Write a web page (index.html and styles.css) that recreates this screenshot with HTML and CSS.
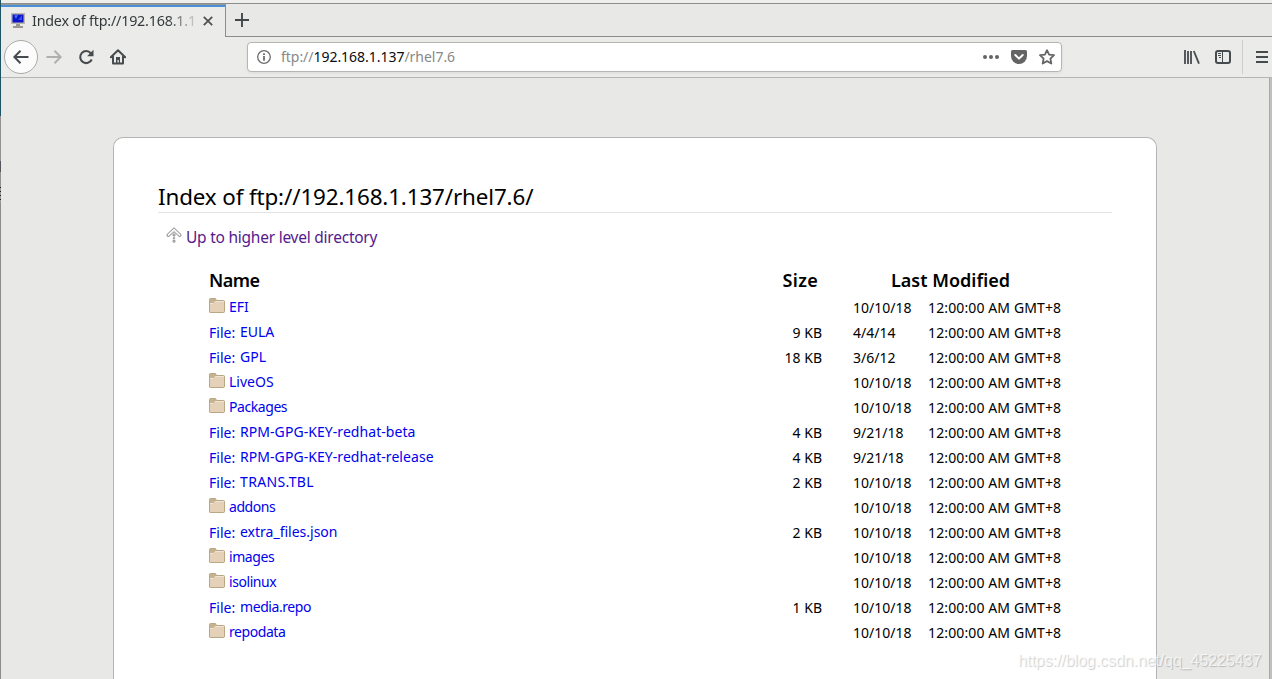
FILE: index.html
```html
<!DOCTYPE html>
<html lang="en">
<head>
<meta charset="utf-8">
<title>Index of ftp://192.168.1.137/rhel7.6/</title>
<link rel="stylesheet" href="styles.css">
</head>
<body>
<svg class="defs" width="0" height="0">
  <symbol id="folder" viewBox="0 0 16 16">
    <path d="M.5 14V1.5Q.5.5 1.5.5H6.5L7.5 2.5H14.5Q15.5 2.5 15.5 3.5V13.500Q15.500 14.500 14.500 14.500H1.500Q.5 14.500.5 14Z" fill="#c6b28e" stroke="#b9a684"/>
    <path d="M1 6H4.500L6.500 3.500H15V14H1Z" fill="#e4d1b8"/>
    <path d="M1 5.500H4.300L6.300 3.500H15" fill="none" stroke="#f0e4d4"/>
  </symbol>
</svg>
<div class="window">
  <div class="edge"><i class="edge-teal"></i><i class="edge-gray"></i><i class="edge-dark"></i><i class="edge-gray short"></i><i class="edge-marks"></i></div>
  <div class="browser">
    <div class="titlebar"></div>
    <div class="tabs">
      <div class="tab">
        <svg class="favicon" width="14" height="16" viewBox="0 0 14 16"><path d="M0 0H14V11H0Z" fill="#b9b7ae"/><path d="M1.500 1.500H12.500V9.500H1.500Z" fill="#0b12c8"/><path d="M3 2.500L7 2 5 6Z" fill="#3f75f5"/><path d="M7 7L11 2V7Z" fill="#2b55eb"/><path d="M5 11H9V13H12V15H2V13H5Z" fill="#99978f"/></svg>
        <span class="tab-title">Index of ftp://192.168.1.1</span>
        <svg class="close" width="10" height="10" viewBox="0 0 10 10"><path d="M.8.8L9.200 9.200M9.200.8L.8 9.200" stroke="#4b4f50" stroke-width="1.700" fill="none"/></svg>
      </div>
      <div class="tab-rest"><svg width="14" height="14" viewBox="0 0 14 14"><path d="M7 0V14M0 7H14" stroke="#43484a" stroke-width="1.900"/></svg></div>
    </div>
    <div class="toolbar">
      <div class="back"><svg width="16" height="16" viewBox="0 0 16 16"><path d="M15.500 8H1.500M7.500 1.800L1.300 8l6.200 6.200" fill="none" stroke="#464b4d" stroke-width="2"/></svg></div>
      <svg class="forward" width="16" height="16" viewBox="0 0 16 16"><path d="M.5 8H14.500M8.500 1.800L14.700 8l-6.200 6.200" fill="none" stroke="#aeb0ae" stroke-width="2"/></svg>
      <svg class="reload" width="16" height="16" viewBox="0 0 16 16"><path d="M12.800 4.200A6 6 0 1 0 13.700 10.500" fill="none" stroke="#464b4d" stroke-width="2.100"/><path d="M15.500.8V7.200H9.100Z" fill="#464b4d"/></svg>
      <svg class="home" width="16" height="16" viewBox="0 0 16 16"><path d="M.8 8.300L8 1.300l7.200 7M3 7.500V14.500H13V7.500" fill="none" stroke="#464b4d" stroke-width="2" stroke-linejoin="round" stroke-linecap="round"/><path d="M6 8H10V14H8.800V11H7.500V14H6Z" fill="#464b4d"/></svg>
      <div class="urlbar">
        <svg width="14" height="14" viewBox="0 0 14 14"><circle cx="7" cy="7" r="6.300" fill="none" stroke="#6d6d6d" stroke-width="1.300"/><path d="M6.100 6H7.900V10.800H6.100ZM6.100 3.200H7.900V4.900H6.100Z" fill="#6d6d6d"/></svg>
        <span class="url">ftp://<b>192.168.1.137</b>/rhel7.6</span>
        <svg class="dots" width="16" height="4" viewBox="0 0 16 4"><g fill="#646464"><circle cx="2" cy="2" r="2"/><circle cx="8" cy="2" r="2"/><circle cx="14" cy="2" r="2"/></g></svg>
        <svg class="pocket" width="16" height="14" viewBox="0 0 16 14"><path d="M1.500 0H14.500Q16 0 16 1.500V6A8 8 0 0 1 0 6V1.500Q0 0 1.500 0Z" fill="#646464"/><path d="M4.300 5L8 8.600 11.700 5" fill="none" stroke="#fff" stroke-width="2" stroke-linecap="round" stroke-linejoin="round"/></svg>
        <svg class="star" width="16" height="16" viewBox="0 0 16 16"><path d="M8 1.200L10.100 5.600 15 6.200 11.400 9.600 12.300 14.500 8 12.100 3.700 14.500 4.600 9.600 1 6.200 5.900 5.600Z" fill="none" stroke="#646464" stroke-width="1.800" stroke-linejoin="round"/></svg>
      </div>
      <svg class="library" width="16" height="14" viewBox="0 0 16 14"><path d="M1 0V14M4 1V14M7 1V14M9.800 1L15 13.700" stroke="#464b4d" stroke-width="1.800"/></svg>
      <svg class="sidebar" width="16" height="14" viewBox="0 0 16 14"><rect x="1" y="1" width="14" height="12" rx="2" fill="none" stroke="#464b4d" stroke-width="2"/><path d="M7.500 1V13M3 3.500H6M3 5.500H6M4 7.500H6" stroke="#464b4d"/></svg>
      <i class="separator"></i>
      <svg class="menu" width="12" height="12" viewBox="0 0 12 12"><path d="M0 1H12M0 6H12M0 11H12" stroke="#464b4d" stroke-width="2"/></svg>
    </div>
    <main class="viewport">
      <section class="card">
        <h1><span>Index of ftp://192.168.1.137/rhel7.6/</span></h1>
        <a class="up"><svg width="16" height="16" viewBox="0 0 16 16"><path d="M8 .8L15 7.500Q15.500 9.800 13.200 9.500L8 4.700 2.800 9.500Q.5 9.800 1 7.500Z" fill="#f6f6f6" stroke="#858585"/><g fill="#eee" stroke="#858585"><circle cx="8" cy="8" r="1.100"/><circle cx="8" cy="11.200" r=".7"/><circle cx="8" cy="14.200" r="1.100"/></g></svg><span>Up to higher level directory</span></a>
        <div class="listing">
          <div class="row head"><span class="name">Name</span><span class="size">Size</span><span class="modified">Last Modified</span></div>
          <div class="row"><a class="dir"><svg><use href="#folder"/></svg>EFI</a><span class="size"></span><span class="date">10/10/18</span><span class="time">12:00:00 AM GMT+8</span></div>
          <div class="row"><a class="file"><i>File:</i>EULA</a><span class="size">9 KB</span><span class="date">4/4/14</span><span class="time">12:00:00 AM GMT+8</span></div>
          <div class="row"><a class="file"><i>File:</i>GPL</a><span class="size">18 KB</span><span class="date">3/6/12</span><span class="time">12:00:00 AM GMT+8</span></div>
          <div class="row"><a class="dir"><svg><use href="#folder"/></svg>LiveOS</a><span class="size"></span><span class="date">10/10/18</span><span class="time">12:00:00 AM GMT+8</span></div>
          <div class="row"><a class="dir tight"><svg><use href="#folder"/></svg>Packages</a><span class="size"></span><span class="date">10/10/18</span><span class="time">12:00:00 AM GMT+8</span></div>
          <div class="row"><a class="file caps"><i>File:</i>RPM-GPG-KEY-redhat-beta</a><span class="size">4 KB</span><span class="date">9/21/18</span><span class="time">12:00:00 AM GMT+8</span></div>
          <div class="row"><a class="file caps"><i>File:</i>RPM-GPG-KEY-redhat-release</a><span class="size">4 KB</span><span class="date">9/21/18</span><span class="time">12:00:00 AM GMT+8</span></div>
          <div class="row"><a class="file wide"><i>File:</i>TRANS.TBL</a><span class="size">2 KB</span><span class="date">10/10/18</span><span class="time">12:00:00 AM GMT+8</span></div>
          <div class="row"><a class="dir tight"><svg><use href="#folder"/></svg>addons</a><span class="size"></span><span class="date">10/10/18</span><span class="time">12:00:00 AM GMT+8</span></div>
          <div class="row"><a class="file"><i>File:</i>extra_files.json</a><span class="size">2 KB</span><span class="date">10/10/18</span><span class="time">12:00:00 AM GMT+8</span></div>
          <div class="row"><a class="dir tight"><svg><use href="#folder"/></svg>images</a><span class="size"></span><span class="date">10/10/18</span><span class="time">12:00:00 AM GMT+8</span></div>
          <div class="row"><a class="dir tight"><svg><use href="#folder"/></svg>isolinux</a><span class="size"></span><span class="date">10/10/18</span><span class="time">12:00:00 AM GMT+8</span></div>
          <div class="row"><a class="file tight"><i>File:</i>media.repo</a><span class="size">1 KB</span><span class="date">10/10/18</span><span class="time">12:00:00 AM GMT+8</span></div>
          <div class="row"><a class="dir tight"><svg><use href="#folder"/></svg>repodata</a><span class="size"></span><span class="date">10/10/18</span><span class="time">12:00:00 AM GMT+8</span></div>
        </div>
      </section>
      <div class="scrollbar"></div>
    </main>
  </div>
</div>
<div class="watermark">https://blog.csdn.net/qq_45225437</div>
</body>
</html>
```
FILE: styles.css
```css
* { box-sizing: border-box; }
body { margin: 0; overflow: hidden; font: 14px/20px "Noto Sans", sans-serif; color: #000; }
svg { display: block; flex: none; }
i { font-style: normal; }
.defs { position: absolute; }
.window { display: flex; width: 1272px; height: 679px; background: #e8e8e6; }
.edge { width: 1px; background: #8d8d8d; display: flex; flex-direction: column; }
.edge-teal { height: 116px; background: #1e5365; }
.edge-gray { height: 45px; background: #929290; }
.edge-gray.short { height: 15px; }
.edge-dark { height: 11px; background: #55565c; }
.edge-marks { height: 16px; background: repeating-linear-gradient(#222 0 1px, #999 1px 4px); }
.browser { flex: 1; display: flex; flex-direction: column; min-width: 0; }
.titlebar { height: 4px; background: #eeeeec; border-bottom: 1px solid #8b8e8b; }
.tabs { height: 33px; display: flex; }
.tab { width: 224px; padding: 0 11px 0 10px; display: flex; align-items: center; background: linear-gradient(#999b98 0 1px, #4a90d9 1px 3px, #ebebe9 3px); }
.favicon { margin-top: 1px; }
.tab-title { margin-left: 7px; width: 164px; white-space: nowrap; font-size: 14.300px; letter-spacing: -.2px; color: #33393b; -webkit-mask-image: linear-gradient(90deg, #000 135px, transparent 169px); mask-image: linear-gradient(90deg, #000 135px, transparent 169px); }
.close { margin: 1px 0 0 7px; }
.tab-rest { flex: 1; border-left: 1px solid #8b8e8b; border-bottom: 1px solid #8b8e8b; padding: 9px 0 0 9px; }
.toolbar { height: 41px; display: flex; align-items: center; background: #ebebe9; border-bottom: 1px solid #b5b5b2; }
.back { margin-left: 3px; width: 34px; height: 34px; border: 1px solid #aaaaa7; border-radius: 50%; background: #fcfcfc; display: grid; place-items: center; }
.forward { margin-left: 8px; }
.reload { margin-left: 16px; }
.home { margin-left: 16px; }
.urlbar { margin-left: 121px; width: 815px; height: 30px; border: 1px solid #b5b5b2; border-radius: 4px; background: #fff; box-shadow: 0 1px 3px #0001; display: flex; align-items: center; padding: 0 6px 0 9px; }
.url { margin-left: 10px; letter-spacing: -.03px; color: #888; }
.url b { font-weight: 400; color: #0c0c0c; }
.dots { margin-left: auto; }
.pocket { margin-left: 12px; }
.star { margin-left: 12px; }
.library { margin-left: 122px; }
.sidebar { margin-left: 15px; }
.separator { width: 1px; height: 34px; background: #cececc; margin-left: 11px; }
.menu { margin-left: 13px; }
.viewport { flex: 1; display: flex; justify-content: space-between; min-height: 0; }
.card { margin: 59px 0 0 112px; width: 1044px; border: 1px solid #b4b4b4; border-bottom: 0; border-radius: 10px 10px 0 0; background: #fff; padding: 43px 44px 0; height: 543px; }
h1 { margin: 0; height: 32px; font: 400 22.400px/32px "Noto Sans", sans-serif; letter-spacing: -.13px; border-bottom: 1px solid #e3e3e3; white-space: nowrap; }
.up { display: flex; margin: 13px 0 0 8px; height: 22px; color: #551a8b; font-size: 15.500px; letter-spacing: -.24px; line-height: 22px; }
.up svg { margin-top: 1px; }
.up span { margin-left: 4px; }
.listing { margin: 18px 0 0 51px; }
.row { height: 25px; line-height: 25px; display: grid; grid-template-columns: 524px 89px 31px 75px 140px; white-space: nowrap; }
.row.head { height: 29px; line-height: 29px; font-size: 18px; font-weight: 600; }
.head .name { letter-spacing: -.5px; }
.size { text-align: right; }
.head .size { padding-right: 4px; letter-spacing: .3px; }
.date, .modified { grid-column: 4; }
.modified { margin-left: 38px; }
.time { letter-spacing: .12px; }
.row a { color: #0000ee; display: flex; }
.dir svg { width: 16px; height: 16px; margin: 3px 4px 0 0; }
.row .dir, .row .file { line-height: 24px; }
.file i { width: 31px; line-height: 26px; letter-spacing: 0; }
.row .tight { letter-spacing: -.43px; }
.row .caps { letter-spacing: .06px; }
.row .wide { letter-spacing: .35px; }
.scrollbar { width: 3px; background: #c0c0c0; border-left: 1px solid #a9a9a9; }
.watermark { position: absolute; left: 1018px; top: 651px; font: 16px/20px "Liberation Sans", sans-serif; letter-spacing: -.07px; color: #ffffffb0; text-shadow: 1px 1px 1px #0003; }
```
